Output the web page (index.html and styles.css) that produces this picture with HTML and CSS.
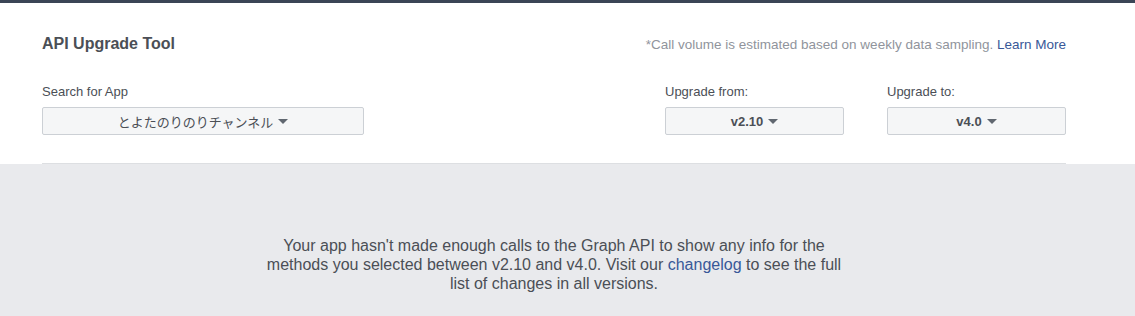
FILE: index.html
```html
<!DOCTYPE html>
<html lang="en">
<head>
  <meta charset="UTF-8" />
  <title>API Upgrade Tool</title>
  <link rel="stylesheet" href="styles.css">
</head>
<body>
  <div class="topbar"></div>

  <div class="tool-card">
    <div class="tool-inner">
      <div class="tool-header">
        <h2>API Upgrade Tool</h2>
        <p class="note">*Call volume is estimated based on weekly data sampling. <a href="#">Learn More</a></p>
      </div>

      <div class="filters">
        <div class="field field-app">
          <label>Search for App</label>
          <button class="select">とよたのりのりチャンネル <span class="caret"></span></button>
        </div>
        <div class="versions">
          <div class="field field-version">
            <label>Upgrade from:</label>
            <button class="select select-bold">v2.10 <span class="caret"></span></button>
          </div>
          <div class="field field-version">
            <label>Upgrade to:</label>
            <button class="select select-bold">v4.0 <span class="caret"></span></button>
          </div>
        </div>
      </div>
    </div>
  </div>

  <div class="results">
    <p class="empty">Your app hasn't made enough calls to the Graph API to show any info for the methods you selected between v2.10 and v4.0. Visit our <a href="#">changelog</a> to see the full list of changes in all versions.</p>
  </div>
</body>
</html>
```

FILE: styles.css
```css
body {
  margin: 0;
  padding: 0;
  background-color: #e9eaed;
  font-family: 'Liberation Sans', Arial, 'Noto Sans CJK JP', sans-serif;
  color: #4b4f56;
}

a {
  color: #385898;
  text-decoration: none;
}

.topbar {
  height: 3px;
  background-color: #3b4556;
}

.tool-card {
  background-color: white;
}

.tool-inner {
  width: 1024px;
  margin-left: 42px;
  padding-top: 31px;
  padding-bottom: 28px;
  border-bottom: 1px solid #dddfe2;
}

.tool-header {
  display: flex;
  justify-content: space-between;
  align-items: center;
}

.tool-header h2 {
  margin: 0;
  font-size: 16px;
  font-weight: bold;
  color: #4b4f56;
  line-height: 20px;
}

.note {
  margin: 0;
  font-size: 13.5px;
  color: #90949c;
}

.filters {
  display: flex;
  justify-content: space-between;
  margin-top: 30px;
}

.versions {
  display: flex;
  gap: 43px;
}

.field label {
  display: block;
  font-size: 13px;
  line-height: 16px;
  margin-bottom: 7px;
}

.field-app {
  width: 322px;
}

.field-version {
  width: 179px;
}

.select {
  display: flex;
  align-items: center;
  justify-content: center;
  gap: 5px;
  width: 100%;
  height: 28px;
  padding: 0 8px;
  background-color: #f5f6f7;
  border: 1px solid #ccd0d5;
  border-radius: 2px;
  font-family: 'Liberation Sans', Arial, 'Noto Sans CJK JP', sans-serif;
  font-size: 13px;
  color: #4b4f56;
}

.select-bold {
  font-weight: bold;
}

.caret {
  width: 0;
  height: 0;
  border-left: 5px solid transparent;
  border-right: 5px solid transparent;
  border-top: 5px solid #606770;
}

.results {
  width: 1024px;
  margin-left: 42px;
  padding-top: 72px;
  text-align: center;
}

.empty {
  width: 580px;
  margin: 0 auto;
  font-size: 16px;
  line-height: 19px;
}
```
